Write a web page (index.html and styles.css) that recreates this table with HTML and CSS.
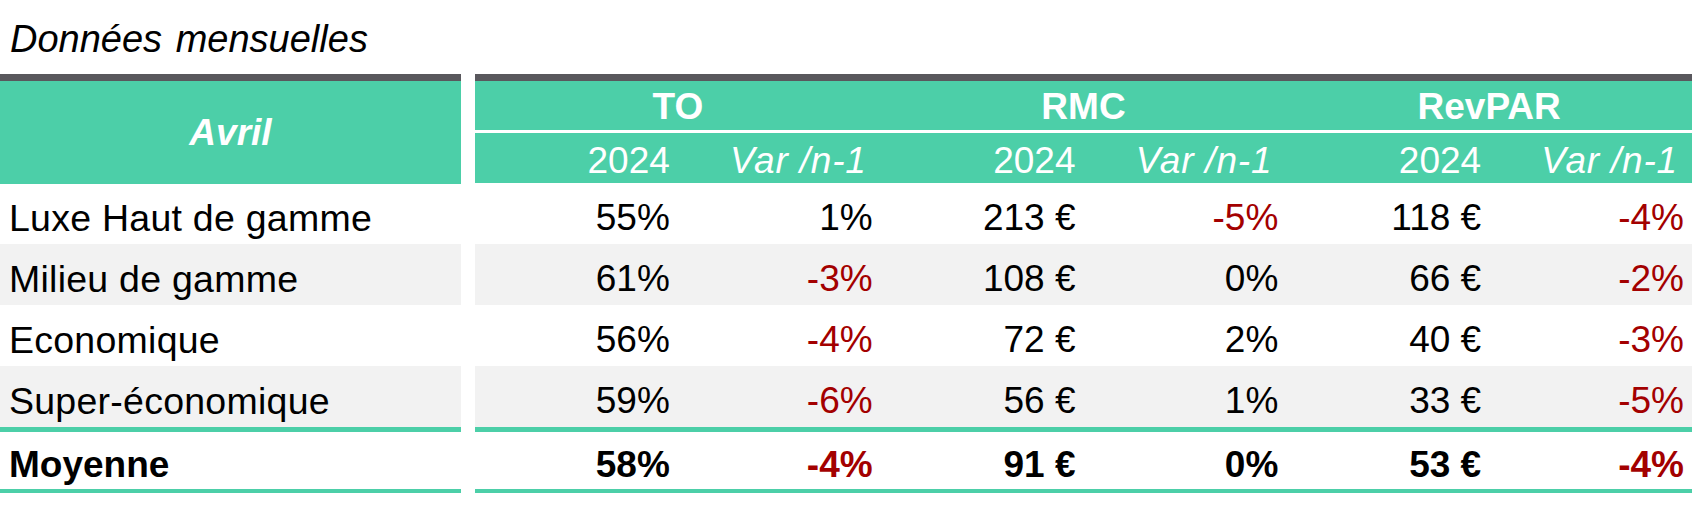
FILE: index.html
```html
<!DOCTYPE html>
<html lang="fr">
<head>
<meta charset="utf-8">
<title>Données mensuelles</title>
<link rel="stylesheet" href="styles.css">
</head>
<body>
<div class="title">Données mensuelles</div>
<div class="grid">
  <div class="month">Avril</div>
  <div class="group">TO</div>
  <div class="group">RMC</div>
  <div class="group">RevPAR</div>

  <div class="sub">2024</div><div class="sub var">Var /n-1</div>
  <div class="sub">2024</div><div class="sub var">Var /n-1</div>
  <div class="sub">2024</div><div class="sub var">Var /n-1</div>

  <div class="label">Luxe Haut de gamme</div>
  <div class="cell">55%</div><div class="cell">1%</div>
  <div class="cell">213 €</div><div class="cell neg">-5%</div>
  <div class="cell">118 €</div><div class="cell neg">-4%</div>

  <div class="label alt">Milieu de gamme</div>
  <div class="cell alt">61%</div><div class="cell alt neg">-3%</div>
  <div class="cell alt">108 €</div><div class="cell alt">0%</div>
  <div class="cell alt">66 €</div><div class="cell alt neg">-2%</div>

  <div class="label">Economique</div>
  <div class="cell">56%</div><div class="cell neg">-4%</div>
  <div class="cell">72 €</div><div class="cell">2%</div>
  <div class="cell">40 €</div><div class="cell neg">-3%</div>

  <div class="label alt">Super-économique</div>
  <div class="cell alt">59%</div><div class="cell alt neg">-6%</div>
  <div class="cell alt">56 €</div><div class="cell alt">1%</div>
  <div class="cell alt">33 €</div><div class="cell alt neg">-5%</div>

  <div class="label total">Moyenne</div>
  <div class="cell total">58%</div><div class="cell total neg">-4%</div>
  <div class="cell total">91 €</div><div class="cell total">0%</div>
  <div class="cell total">53 €</div><div class="cell total neg">-4%</div>
</div>
</body>
</html>
```
FILE: styles.css
```css
html, body {
  margin: 0;
  padding: 0;
  background: #ffffff;
}
body {
  font-family: "Liberation Sans", Arial, sans-serif;
  color: #000000;
  width: 1693px;
}
.title {
  box-sizing: border-box;
  height: 74px;
  padding: 4px 0 0 10px;
  font-size: 38px;
  line-height: 70px;
  font-style: italic;
  word-spacing: 3px;
}
.grid {
  display: grid;
  width: 1692px;
  grid-template-columns: 475px repeat(6, 1fr);
  grid-template-rows: 56px 53px 61px 61px 61px 61px 66px;
  font-size: 37px;
}
.month {
  grid-row: 1 / span 2;
  grid-column: 1;
  margin: 0 14px -1px 0;
  background: #4ccfa8;
  border-top: 7px solid #59585d;
  color: #ffffff;
  font-weight: bold;
  font-style: italic;
  display: flex;
  align-items: center;
  justify-content: center;
}
.group {
  grid-column: span 2;
  background: #4ccfa8;
  border-top: 7px solid #59585d;
  color: #ffffff;
  font-weight: bold;
  text-align: center;
  padding-top: 3px;
  line-height: 46px;
}
.sub {
  background: #4ccfa8;
  border-top: 3px solid #ffffff;
  color: #ffffff;
  text-align: right;
  padding: 5px 8px 0 0;
  line-height: 45px;
}
.sub.var {
  font-style: italic;
  letter-spacing: 0.8px;
  padding-right: 14px;
}
.label {
  grid-column: 1;
  margin-right: 14px;
  padding: 9px 0 0 9px;
  font-size: 37.5px;
  letter-spacing: 0.25px;
  line-height: 52px;
  white-space: nowrap;
}
.cell {
  text-align: right;
  padding: 9px 8px 0 0;
  line-height: 52px;
  white-space: nowrap;
}
.alt {
  background: #f2f2f2;
}
.neg {
  color: #a30000;
}
.total {
  font-weight: bold;
  border-top: 5px solid #4ccfa8;
  border-bottom: 4px solid #4ccfa8;
  line-height: 48px;
}
.label.total {
  font-size: 37px;
  letter-spacing: 0;
}
```
